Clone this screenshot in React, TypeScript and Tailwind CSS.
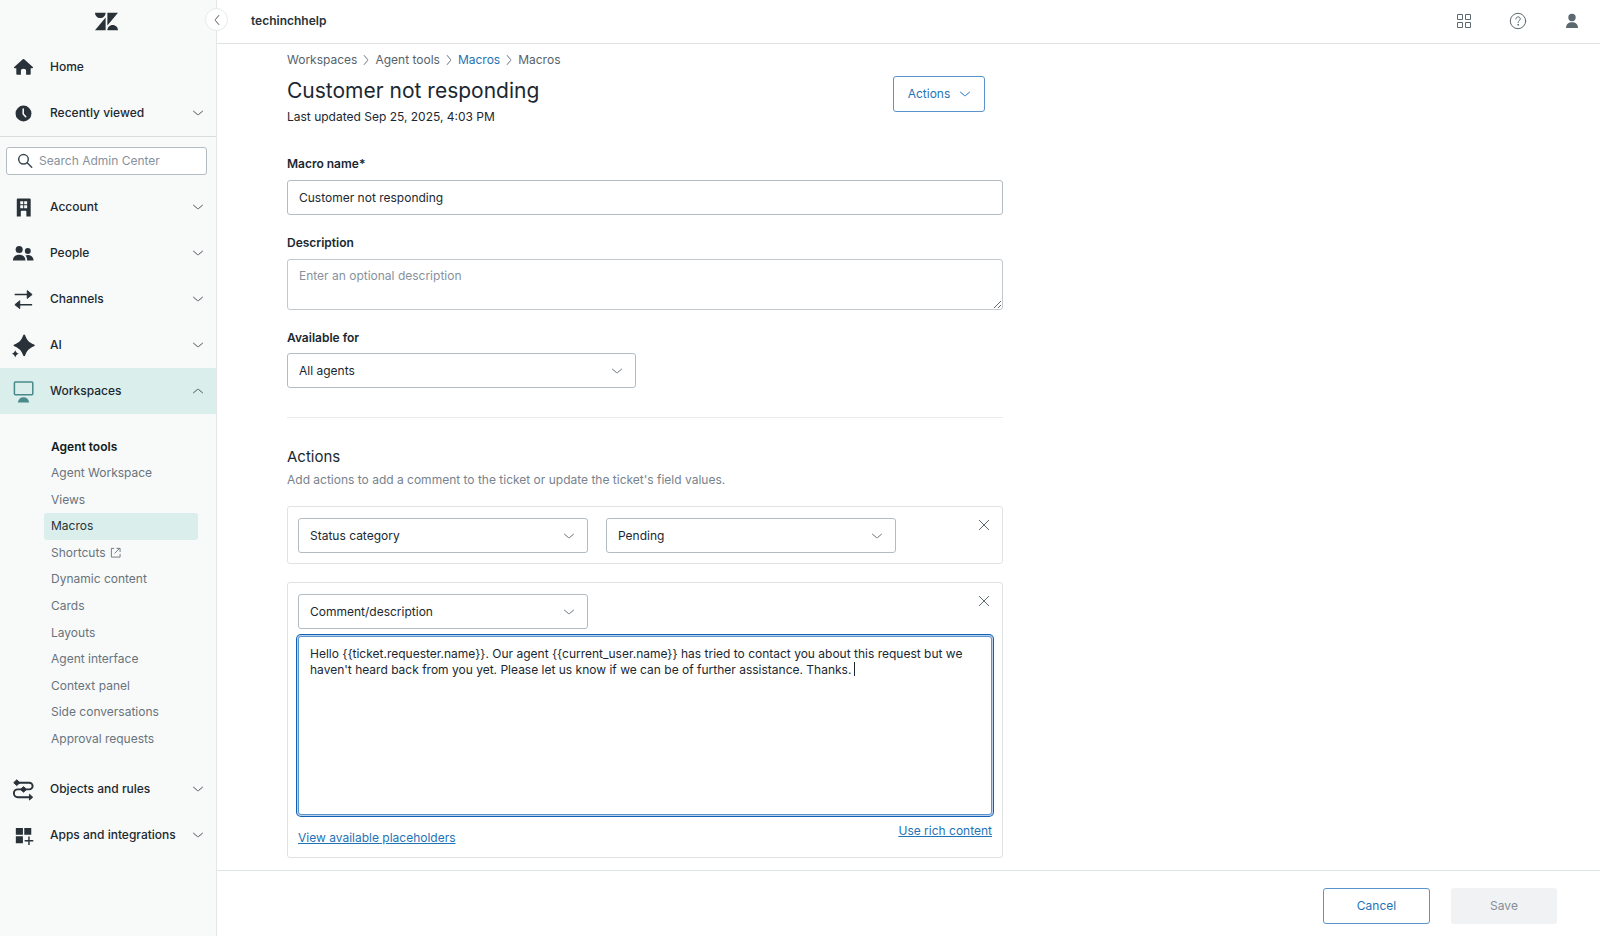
import { ReactNode, useState } from "react";

function Chevron({ className = "", up = false }: { className?: string; up?: boolean }) {
    return (
        <svg
            viewBox="0 0 10 6"
            className={`h-[6px] w-[10px] shrink-0 overflow-visible ${up ? "rotate-180" : ""} ${className}`}
            fill="none"
            stroke="currentColor"
            strokeWidth="1"
            strokeLinecap="round"
            aria-hidden="true"
        >
            <path d="M.5 1.2l4 3.4a.8.8 0 0 0 1 0l4-3.4" />
        </svg>
    );
}

const icons: Record<string, ReactNode> = {
    home: (
        <path d="M12 3.2a1 1 0 0 1 .7.3l9 8c.5.5.2 1.2-.5 1.2h-1.7v6c0 .5-.3.8-.8.8h-4v-4.3c0-1.2-.9-2-2.7-2s-2.7.8-2.7 2v4.3h-4c-.5 0-.8-.3-.8-.8v-6H2.8c-.7 0-1-.7-.5-1.2l9-8a1 1 0 0 1 .7-.3z" />
    ),
    clock: (
        <>
            <circle cx="12" cy="12" r="8.3" />
            <path d="M11.7 7.2v5.2l2.6 3" fill="none" stroke="#f8faf9" strokeWidth="1.6" strokeLinecap="round" />
        </>
    ),
    building: (
        <path
            fillRule="evenodd"
            d="M6 2.6h12.5a1 1 0 0 1 1 1v17.8H15v-5.2a.8.8 0 0 0-.8-.8H10a.8.8 0 0 0-.8.8v5.2H5V3.6a1 1 0 0 1 1-1zM8.6 5.600v3.1h3.1V5.600zm4.100 0v3.1h3.1V5.600zM8.600 9.700v3h3.1v-3zm4.100 0v3h3.1v-3z"
        />
    ),
    people: (
        <>
            <circle cx="7.5" cy="7.8" r="3.7" />
            <path d="M1 19.3c0-3.8 2.7-6 6.5-6s6.5 2.2 6.5 6z" />
            <circle cx="16.5" cy="9.3" r="3.1" />
            <path d="M15.8 19.3c0-2.3-.6-4-1.7-5.3.7-.3 1.5-.5 2.4-.5 3.2 0 6 2.2 6 5.8z" />
        </>
    ),
    channels: (
        <>
            <path d="M2.8 6.800h14M7 17.400h14" fill="none" stroke="currentColor" strokeWidth="1.5" />
            <path d="M15.9 2.7 21 6.8l-5.1 4.1zM8.1 13.3 3 17.4l5.1 4.1z" stroke="currentColor" strokeLinejoin="round" />
        </>
    ),
    ai: (
        <>
            <path d="M12.7.5c.5 0 .8.3 1 .8 1.9 5.400 3.800 7.200 9.300 9.700 1.1.5 1.1 1.300 0 1.800-5.500 2.500-7.400 4.300-9.300 9.700-.4 1-1.600 1-2 0-1.900-5.400-3.800-7.200-9.300-9.700-1.100-.5-1.100-1.300 0-1.800 5.500-2.500 7.400-4.300 9.300-9.700.2-.5.5-.8 1-.8z" />
            <path d="M3.4 17c.8 2.2 1.5 2.9 3.7 3.7-2.2.8-2.9 1.5-3.7 3.7-.8-2.2-1.5-2.9-3.7-3.7 2.2-.8 2.9-1.5 3.7-3.7z" />
        </>
    ),
    workspaces: (
        <>
            <rect x="2.5" y="2.1" width="19.2" height="13.3" rx="1" fill="none" stroke="currentColor" strokeWidth="1.6" />
            <path d="M6 23.5c.8-3.6 2.9-5.4 6-5.4s5.2 1.8 6 5.4z" />
        </>
    ),
    objects: (
        <>
            <path
                d="M5 4.9h13a3.5 3.5 0 0 1 0 7H6a4 4 0 0 0 0 8.1h13"
                fill="none"
                stroke="currentColor"
                strokeWidth="2"
            />
            <path
                d="M5 1.9 8.2 4.9 5 7.9 1.8 4.9zM12 9l3.2 2.9L12 14.8l-3.200-2.900zM18.2 17l3.4 3-3.4 3z"
                stroke="currentColor"
                strokeLinejoin="round"
            />
        </>
    ),
    apps: (
        <>
            <path d="M4 4.1h7.4v7.1H4zM12.8 4.1h7.3v7.1h-7.3zM4 12.9h7.4V20H4z" />
            <path d="M17.7 13v9M13.2 17.5h9" fill="none" stroke="currentColor" strokeWidth="1.5" />
        </>
    ),
};

function NavRow({ icon, label, active = false, chevron = true }: { icon: string; label: string; active?: boolean; chevron?: boolean }) {
    return (
        <button
            type="button"
            className={`flex h-[46px] w-full shrink-0 items-center pr-[13px] pl-3 text-left font-medium ${active ? "bg-[#daeeec]" : ""}`}
        >
            <svg
                viewBox="0 0 24 24"
                className={`size-[23px] shrink-0 overflow-visible ${active ? "text-[#4b8a8b]" : "text-[#293239]"}`}
                fill="currentColor"
                aria-hidden="true"
            >
                {icons[icon]}
            </svg>
            <span className="ml-[15px] flex-1 whitespace-nowrap">{label}</span>
            {chevron && <Chevron up={active} className="text-[#4b555e]" />}
        </button>
    );
}

const agentTools = [
    "Agent Workspace",
    "Views",
    "Macros",
    "Shortcuts",
    "Dynamic content",
    "Cards",
    "Layouts",
    "Agent interface",
    "Context panel",
    "Side conversations",
    "Approval requests",
];

function Sidebar() {
    return (
        <nav className="relative flex w-[217px] shrink-0 flex-col border-r border-[#e3e7e7] bg-[#f8faf9]" aria-label="Admin Center">
            <div className="mb-[2px] flex h-[42px] items-center justify-center pr-[3px]">
                <svg viewBox="0 0 24 24" className="size-[23px] text-[#293239]" fill="currentColor" role="img" aria-label="Zendesk">
                    <path d="M12.914 2.904V16.29L24 2.905H12.914zM0 2.906C0 5.966 2.483 8.45 5.543 8.45s5.542-2.484 5.543-5.544H0zm11.086 4.807L0 21.096h11.086V7.714zm7.37 7.84c-3.063 0-5.542 2.48-5.542 5.543H24c0-3.06-2.48-5.543-5.543-5.543z" />
                </svg>
            </div>
            <button
                type="button"
                aria-label="Collapse sidebar"
                className="absolute top-2 -right-[12px] z-10 flex size-[23px] items-center justify-center rounded-full border border-[#e6eaea] bg-white text-[#4b555e]"
            >
                <Chevron className="rotate-90" />
            </button>

            <NavRow icon="home" label="Home" chevron={false} />
            <NavRow icon="clock" label="Recently viewed" />

            <div className="border-t border-[#d8dcde] pt-[10px] pr-[9px] pb-[9px] pl-[6px]">
                <label className="flex h-7 items-center rounded-[3px] border border-[#b4bcc3] bg-white pl-[10px]">
                    <svg viewBox="0 0 16 16" className="size-4 shrink-0 text-[#3c4b54]" fill="none" stroke="currentColor" strokeWidth="1.5" strokeLinecap="round" aria-hidden="true">
                        <circle cx="6.5" cy="6.3" r="4.8" />
                        <path d="m10.2 9.8 4.5 4.4" />
                    </svg>
                    <input
                        type="search"
                        aria-label="Search Admin Center"
                        placeholder="Search Admin Center"
                        className="ml-[6px] w-full min-w-0 bg-transparent outline-none placeholder:text-[#87929d]"
                    />
                </label>
            </div>

            <NavRow icon="building" label="Account" />
            <NavRow icon="people" label="People" />
            <NavRow icon="channels" label="Channels" />
            <NavRow icon="ai" label="AI" />
            <NavRow icon="workspaces" label="Workspaces" active />

            <div className="pt-5 pr-[18px] pb-[14px] pl-11">
                <h2 className="flex h-[26px] items-center pl-[7px] font-semibold text-[#111a20]">Agent tools</h2>
                <ul className="flex h-[292px] flex-col">
                    {agentTools.map((item) => (
                        <li key={item} className="flex-1">
                            <a
                                href="#"
                                className={`flex h-full items-center gap-1 rounded-[3px] pl-[7px] ${item === "Macros" ? "bg-[#daeeec] text-[#293239]" : "text-[#68737d]"}`}
                            >
                                {item}
                                {item === "Shortcuts" && (
                                    <svg viewBox="0 0 12 12" className="size-[11px]" fill="none" stroke="currentColor" strokeWidth="1" aria-hidden="true">
                                        <path d="M4.5 1.5h-3V11H11V7.5M5 7l5.500-5.500M7 1.5h4v4" />
                                    </svg>
                                )}
                            </a>
                        </li>
                    ))}
                </ul>
            </div>

            <NavRow icon="objects" label="Objects and rules" />
            <NavRow icon="apps" label="Apps and integrations" />
        </nav>
    );
}

function Topbar() {
    return (
        <header className="flex h-11 shrink-0 items-center justify-between border-b border-[#dfe3e4] pr-5 pb-[2px] pl-[34px]">
            <span className="font-semibold text-[#293239]">techinchhelp</span>
            <div className="flex items-center gap-[37px] text-[#5c6970]">
                <button type="button" aria-label="Products">
                    <svg viewBox="0 0 16 16" className="size-4" fill="none" stroke="currentColor" strokeWidth="1" aria-hidden="true">
                        <path d="M1.5 1.5h5v5h-5zM9.5 1.5h5v5h-5zM1.5 9.5h5v5h-5zM9.5 9.5h5v5h-5z" />
                    </svg>
                </button>
                <button type="button" aria-label="Help">
                    <svg viewBox="0 0 18 18" className="size-[18px]" fill="none" stroke="currentColor" strokeWidth="1" strokeLinecap="round" aria-hidden="true">
                        <circle cx="9" cy="9" r="7.7" />
                        <path d="M6.9 7.1c0-1.3.9-2.2 2.2-2.2s2.2.8 2.2 2c0 1.7-2.2 1.7-2.2 3.5" />
                        <circle cx="9.1" cy="12.8" r=".4" fill="currentColor" />
                    </svg>
                </button>
                <button type="button" aria-label="Profile">
                    <svg viewBox="0 0 16 16" className="size-4" fill="currentColor" aria-hidden="true">
                        <circle cx="8" cy="4.5" r="3.7" />
                        <path d="M2 15c0-3.7 2.5-5.7 6-5.7s6 2 6 5.7z" />
                    </svg>
                </button>
            </div>
        </header>
    );
}

function SelectBox({ label, id, option, className }: { label?: string; id: string; option: string; className: string }) {
    return (
        <div className={`relative ${className}`}>
            <select
                id={id}
                aria-label={label}
                className="h-[35px] w-full appearance-none rounded-[3px] border border-[#b4bcc3] bg-white pr-8 pl-[11px] outline-none"
            >
                <option>{option}</option>
            </select>
            <Chevron className="pointer-events-none absolute top-[15px] right-[14px] text-[#68737d]" />
        </div>
    );
}

function RemoveButton() {
    return (
        <button type="button" aria-label="Remove action" className="mr-[2px] flex h-[14px] w-3 items-center justify-center text-[#5c6970]">
            <svg viewBox="0 0 12 12" className="size-3 shrink-0" fill="none" stroke="currentColor" strokeWidth="1" strokeLinecap="round" aria-hidden="true">
                <path d="m1.3 1.3 9.4 9.4M10.7 1.3l-9.4 9.4" />
            </svg>
        </button>
    );
}

function Crumb() {
    return <Chevron className="-rotate-90 text-[#68737d]" />;
}

export default function App() {
    const [name, setName] = useState("Customer not responding");
    const [comment, setComment] = useState(
        "Hello {{ticket.requester.name}}. Our agent {{current_user.name}} has tried to contact you about this request but we haven't heard back from you yet. Please let us know if we can be of further assistance. Thanks. "
    );

    return (
        <div className="flex min-h-screen bg-white font-['Inter','Liberation_Sans',sans-serif] text-[12px] leading-4 text-[#1b2831]">
            <Sidebar />
            <div className="flex min-w-0 flex-1 flex-col">
                <Topbar />

                <main className="w-full max-w-[786px] pl-[70px]">
                    <nav aria-label="Breadcrumb" className="flex items-center gap-1 pt-2 text-[#56636b]">
                        <span>Workspaces</span>
                        <Crumb />
                        <span>Agent tools</span>
                        <Crumb />
                        <a href="#" className="text-[#1f73b7]">Macros</a>
                        <Crumb />
                        <span>Macros</span>
                    </nav>

                    <div className="flex items-start justify-between pt-2 pr-[18px]">
                        <div>
                            <h1 className="text-[21px] leading-[30px]">Customer not responding</h1>
                            <p className="pt-[3px]">Last updated Sep 25, 2025, 4:03 PM</p>
                        </div>
                        <button type="button" className="flex h-9 w-[92px] items-center justify-center gap-[10px] rounded-[3px] border border-[#5b93cb] text-[#1f73b7]">
                            Actions <Chevron />
                        </button>
                    </div>

                    <div className="pt-[31px]">
                        <label htmlFor="macro-name" className="block font-semibold">Macro name*</label>
                        <input
                            id="macro-name"
                            type="text"
                            value={name}
                            onChange={(e) => setName(e.target.value)}
                            className="mt-2 block h-[35px] w-full rounded-[3px] border border-[#b4bcc3] px-[11px] outline-none"
                        />
                    </div>

                    <div className="pt-5">
                        <label htmlFor="description" className="block font-semibold">Description</label>
                        <textarea
                            id="description"
                            placeholder="Enter an optional description"
                            className="mt-2 block h-[51px] w-full resize-y rounded-[3px] border border-[#c2c8cc] px-[11px] py-2 outline-none placeholder:text-[#87929d]"
                        />
                    </div>

                    <div className="pt-5">
                        <label htmlFor="available-for" className="block font-semibold">Available for</label>
                        <SelectBox id="available-for" option="All agents" className="mt-[7px] w-[349px]" />
                    </div>

                    <hr className="mt-[29px] border-[#e9ebed]" />

                    <section className="pt-[27px]">
                        <h2 className="text-[15px] leading-6">Actions</h2>
                        <p className="pt-[3px] text-[#77838d]">Add actions to add a comment to the ticket or update the ticket's field values.</p>

                        <div className="mt-[18px] flex items-start justify-between rounded-[3px] border border-[#dfe3e5] px-[10px] pt-[11px] pb-[10px]">
                            <div className="flex gap-[18px]">
                                <SelectBox id="status-field" label="Field" option="Status category" className="w-[290px]" />
                                <SelectBox id="status-value" label="Value" option="Pending" className="w-[290px]" />
                            </div>
                            <RemoveButton />
                        </div>

                        <div className="mt-[18px] rounded-[3px] border border-[#dfe3e5] px-[10px] pt-[11px] pb-[10px]">
                            <div className="flex items-start justify-between">
                                <SelectBox id="comment-field" label="Field" option="Comment/description" className="w-[290px]" />
                                <RemoveButton />
                            </div>
                            <div className="relative mt-[7px]">
                                <textarea
                                    aria-label="Comment"
                                    value={comment}
                                    onChange={(e) => setComment(e.target.value)}
                                    className="block h-[179px] w-full resize-none rounded-[3px] border border-[#5b93cb] px-[11px] py-[9px] ring-1 ring-[#0f62b4] ring-offset-1 ring-offset-[#bcd2ec] outline-none"
                                />
                                {/* text cursor */}
                                <span className="absolute top-[26px] left-[556px] h-[14px] w-px bg-[#1b2831]" />
                            </div>
                            <div className="flex items-start justify-between pt-2 pb-px">
                                <a href="#" className="pt-[7px] text-[#1f73b7] underline">View available placeholders</a>
                                <a href="#" className="text-[#1f73b7] underline">Use rich content</a>
                            </div>
                        </div>
                    </section>
                </main>

                <footer className="mt-auto flex justify-end gap-[21px] border-t border-[#dfe5e5] pt-[17px] pr-[43px] pb-3">
                    <button type="button" className="h-9 w-[107px] rounded-[3px] border border-[#5b93cb] text-[#1f73b7]">Cancel</button>
                    <button type="button" disabled className="h-9 w-[106px] rounded-[3px] bg-[#f0f2f4] text-[#848f99]">Save</button>
                </footer>
            </div>
        </div>
    );
}
